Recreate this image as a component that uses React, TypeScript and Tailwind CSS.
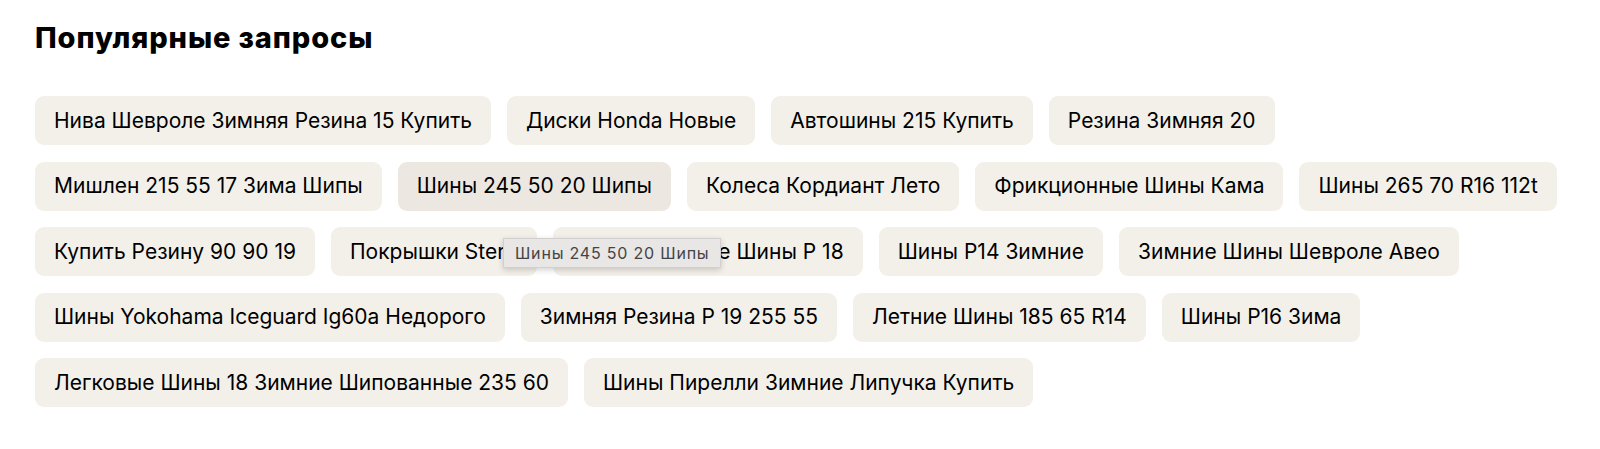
import React from 'react';

const queries: string[] = [
  'Нива Шевроле Зимняя Резина 15 Купить',
  'Диски Honda Новые',
  'Автошины 215 Купить',
  'Резина Зимняя 20',
  'Мишлен 215 55 17 Зима Шипы',
  'Шины 245 50 20 Шипы',
  'Колеса Кордиант Лето',
  'Фрикционные Шины Кама',
  'Шины 265 70 R16 112t',
  'Купить Резину 90 90 19',
  'Покрышки Stern',
  'Нешипованные Шины Р 18',
  'Шины Р14 Зимние',
  'Зимние Шины Шевроле Авео',
  'Шины Yokohama Iceguard Ig60a Недорого',
  'Зимняя Резина Р 19 255 55',
  'Летние Шины 185 65 R14',
  'Шины Р16 Зима',
  'Легковые Шины 18 Зимние Шипованные 235 60',
  'Шины Пирелли Зимние Липучка Купить',
];

const HOVERED = 'Шины 245 50 20 Шипы';

export default function App() {
  return (
    <div className="min-h-[449px] bg-white pl-[35px] pr-[30px] pt-[20px] font-['Inter','Noto_Sans',sans-serif] text-black">
      <h2 className="text-[29px] font-extrabold leading-9 tracking-[0.9px]">Популярные запросы</h2>

      <div className="relative mt-[40px]">
        <div className="flex flex-wrap gap-x-4 gap-y-[16.5px]">
          {queries.map((q) => (
            <a
              key={q}
              href="#"
              className={
                q === HOVERED
                  ? 'flex h-[49px] items-center rounded-[9px] bg-[#ece8e1] px-[19px] text-[21px] text-black'
                  : 'flex h-[49px] items-center rounded-[9px] bg-[#f3f0ea] px-[19px] text-[21px] text-black'
              }
            >
              {q}
            </a>
          ))}
        </div>

        {/* native title tooltip of the hovered chip */}
        <div className="absolute left-[468px] top-[142px] flex h-[30px] items-center border border-[#d2cfcf] bg-[#e9e6e6] px-[11px] text-[16px] tracking-[0.8px] text-[#444] shadow-[0_2px_6px_rgba(0,0,0,0.18)]">
          {HOVERED}
        </div>
      </div>
    </div>
  );
}
